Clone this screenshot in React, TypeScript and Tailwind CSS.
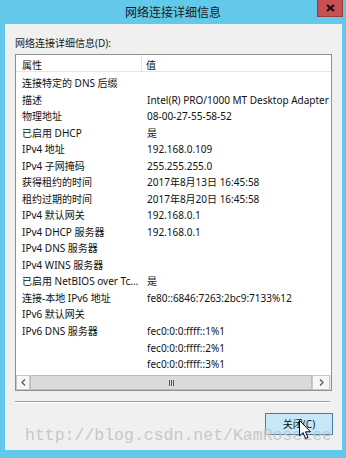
import React from "react";

const rows: [string, string][] = [
  ["连接特定的 DNS 后缀", ""],
  ["描述", "Intel(R) PRO/1000 MT Desktop Adapter"],
  ["物理地址", "08-00-27-55-58-52"],
  ["已启用 DHCP", "是"],
  ["IPv4 地址", "192.168.0.109"],
  ["IPv4 子网掩码", "255.255.255.0"],
  ["获得租约的时间", "2017年8月13日 16:45:58"],
  ["租约过期的时间", "2017年8月20日 16:45:58"],
  ["IPv4 默认网关", "192.168.0.1"],
  ["IPv4 DHCP 服务器", "192.168.0.1"],
  ["IPv4 DNS 服务器", ""],
  ["IPv4 WINS 服务器", ""],
  ["已启用 NetBIOS over Tc...", "是"],
  ["连接-本地 IPv6 地址", "fe80::6846:7263:2bc9:7133%12"],
  ["IPv6 默认网关", ""],
  ["IPv6 DNS 服务器", "fec0:0:0:ffff::1%1"],
  ["", "fec0:0:0:ffff::2%1"],
  ["", "fec0:0:0:ffff::3%1"],
];

const font = { fontFamily: '"Noto Sans", "Noto Sans CJK SC", sans-serif' };

export default function App() {
  return (
    <div
      className="relative w-[346px] h-[458px] overflow-hidden bg-[#63c9ea] flex flex-col text-[#111]"
      style={font}
    >
      {/* title bar */}
      <div className="h-[24px] shrink-0 flex items-center justify-center relative">
        <span className="text-[12px] leading-none text-[#1a1a1a] pt-[1px]">网络连接详细信息</span>
        <div className="absolute left-[317px] top-0 w-[26px] h-[17px] bg-[#c75050] border border-[#9c3a35] border-t-0 flex items-center justify-center">
          <svg width="9" height="8" viewBox="0 0 9 8">
            <path d="M1 1 L8 7 M8 1 L1 7" stroke="#111" strokeWidth="2" />
          </svg>
        </div>
      </div>

      {/* client area */}
      <div className="ml-[5px] w-[337px] h-[426px] bg-[#f0f0f0] flex flex-col pl-[10px]">
        <div className="h-[30px] flex items-end pb-[6px] text-[10px] leading-none text-[#1a1a1a]">
          网络连接详细信息(D):
        </div>

        {/* list view */}
        <div className="w-[317px] h-[337px] border border-[#8f8f94] bg-white flex flex-col">
          <div className="h-[17px] shrink-0 flex border-b border-[#e5e5e5] text-[10px] leading-none">
            <div className="w-[126px] border-r border-[#e5e5e5] pl-[6px] flex items-center pt-[3px]">属性</div>
            <div className="pl-[4px] flex items-center pt-[3px]">值</div>
          </div>
          <div className="flex-1 pt-[3px] overflow-hidden">
            {rows.map(([k, v], i) => (
              <div key={i} className="h-[16.53px] flex items-center text-[10px] leading-none whitespace-nowrap">
                <div className="w-[126px] pl-[6px] shrink-0">{k}</div>
                <div className="pl-[5px]">{v}</div>
              </div>
            ))}
          </div>
          {/* horizontal scrollbar */}
          <div className="h-[15px] shrink-0 flex bg-[#e8e8e8] pr-[1px]">
            <div className="w-[14px] h-full bg-[#f7f7f7] border border-[#c8c8c8] flex items-center justify-center">
              <svg width="5" height="7" viewBox="0 0 5 7">
                <path d="M4 0.5 L1 3.5 L4 6.5" stroke="#555" strokeWidth="1.2" fill="none" />
              </svg>
            </div>
            <div className="flex-1 h-full bg-[#dadada] border border-[#bcbcbc] flex items-center justify-center">
              <div className="flex gap-[1px]">
                <div className="w-[1px] h-[6px] bg-[#555]" />
                <div className="w-[1px] h-[6px] bg-[#555]" />
                <div className="w-[1px] h-[6px] bg-[#555]" />
              </div>
            </div>
            <div className="w-[18px] h-full bg-[#f7f7f7] border border-[#c8c8c8] flex items-center justify-center">
              <svg width="5" height="7" viewBox="0 0 5 7">
                <path d="M1 0.5 L4 3.5 L1 6.5" stroke="#555" strokeWidth="1.2" fill="none" />
              </svg>
            </div>
          </div>
        </div>

        {/* separator */}
        <div className="mt-[10px] w-[315px] h-[1px] bg-[#a0a0a0]" />
        <div className="w-[315px] h-[1px] bg-white" />

        {/* button row */}
        <div className="flex justify-end pr-[9px] mt-[10px]">
          <div className="w-[68px] h-[22px] border border-[#3c7fb1] bg-[#c7e6f8] flex items-center justify-center text-[10px] leading-none text-[#111]">
            关闭(C)
          </div>
        </div>
      </div>

      {/* watermark */}
      <div
        className="absolute left-[25px] top-[428px] text-[16.5px] leading-none text-[#c4c4c4] opacity-90 whitespace-nowrap pointer-events-none"
        style={{ fontFamily: '"Liberation Mono", monospace' }}
      >
        http://blog.csdn.net/KamRoseLee
      </div>

      {/* mouse cursor */}
      <svg className="absolute left-[299px] top-[420px]" width="13" height="21" viewBox="0 0 13 21">
        <path
          d="M0.5 0.5 L0.5 16 L4 12.5 L6.5 18.5 L9 17.5 L6.5 11.8 L11.5 11.8 Z"
          fill="white"
          stroke="black"
          strokeWidth="1"
          strokeLinejoin="round"
        />
      </svg>
    </div>
  );
}
